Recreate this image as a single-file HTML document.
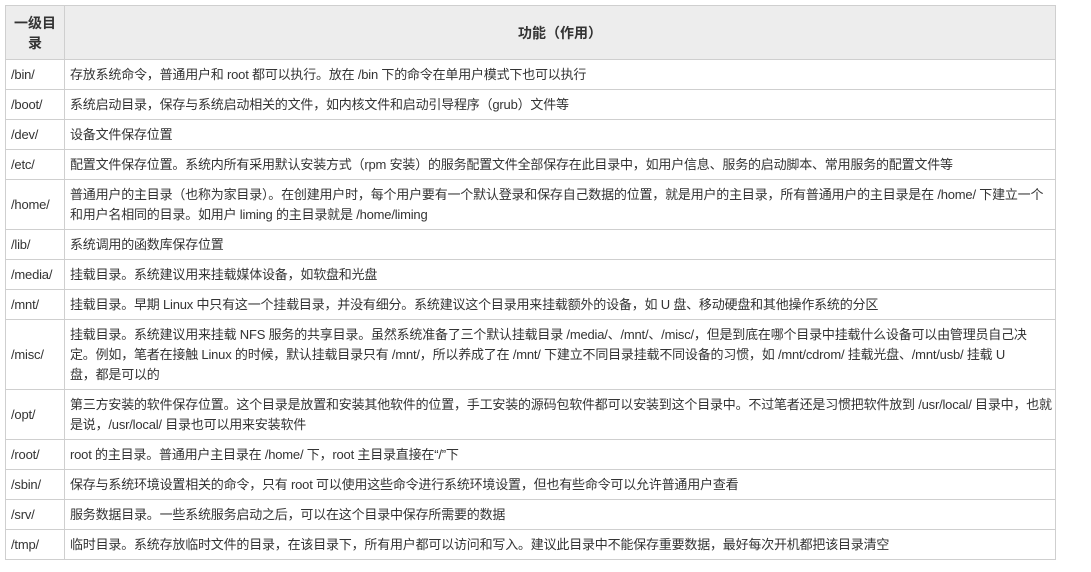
<!DOCTYPE html>
<html><head><meta charset="utf-8"><style>
html,body{margin:0;padding:0;background:#fff;width:1091px;height:572px;overflow:hidden}
body{font-family:"Liberation Sans","Noto Sans CJK SC",sans-serif;font-size:13px;color:#333}
table{position:absolute;left:5px;top:5px;width:1051px;border-collapse:collapse;table-layout:fixed}
td,th{border:1px solid #cfcfcf;padding:0 5px;line-height:20px;vertical-align:middle;text-align:left}
td{letter-spacing:-0.2px}
td.nw{white-space:nowrap;overflow:hidden}
th{background:#ededed;font-weight:bold;text-align:center;height:53px;color:#333;font-size:14px}
td{height:29px}
td.t{height:49px}
td.th3{height:69px}
</style></head><body>
<table>
<colgroup><col style="width:59px"><col></colgroup>
<tr><th>一级目<br>录</th><th>功能（作用）</th></tr>
<tr><td>/bin/</td><td>存放系统命令，普通用户和 root 都可以执行。放在 /bin 下的命令在单用户模式下也可以执行</td></tr>
<tr><td>/boot/</td><td>系统启动目录，保存与系统启动相关的文件，如内核文件和启动引导程序（grub）文件等</td></tr>
<tr><td>/dev/</td><td>设备文件保存位置</td></tr>
<tr><td>/etc/</td><td>配置文件保存位置。系统内所有采用默认安装方式（rpm 安装）的服务配置文件全部保存在此目录中，如用户信息、服务的启动脚本、常用服务的配置文件等</td></tr>
<tr><td class="t">/home/</td><td>普通用户的主目录（也称为家目录）。在创建用户时，每个用户要有一个默认登录和保存自己数据的位置，就是用户的主目录，所有普通用户的主目录是在 /home/ 下建立一个和用户名相同的目录。如用户 liming 的主目录就是 /home/liming</td></tr>
<tr><td>/lib/</td><td>系统调用的函数库保存位置</td></tr>
<tr><td>/media/</td><td>挂载目录。系统建议用来挂载媒体设备，如软盘和光盘</td></tr>
<tr><td>/mnt/</td><td>挂载目录。早期 Linux 中只有这一个挂载目录，并没有细分。系统建议这个目录用来挂载额外的设备，如 U 盘、移动硬盘和其他操作系统的分区</td></tr>
<tr><td class="th3">/misc/</td><td class="nw">挂载目录。系统建议用来挂载 NFS 服务的共享目录。虽然系统准备了三个默认挂载目录 /media/、/mnt/、/misc/，但是到底在哪个目录中挂载什么设备可以由管理员自己决<br>定。例如，笔者在接触 Linux 的时候，默认挂载目录只有 /mnt/，所以养成了在 /mnt/ 下建立不同目录挂载不同设备的习惯，如 /mnt/cdrom/ 挂载光盘、/mnt/usb/ 挂载 U<br>盘，都是可以的</td></tr>
<tr><td class="t">/opt/</td><td class="nw">第三方安装的软件保存位置。这个目录是放置和安装其他软件的位置，手工安装的源码包软件都可以安装到这个目录中。不过笔者还是习惯把软件放到 /usr/local/ 目录中，也就<br>是说，/usr/local/ 目录也可以用来安装软件</td></tr>
<tr><td>/root/</td><td>root 的主目录。普通用户主目录在 /home/ 下，root 主目录直接在“/”下</td></tr>
<tr><td>/sbin/</td><td>保存与系统环境设置相关的命令，只有 root 可以使用这些命令进行系统环境设置，但也有些命令可以允许普通用户查看</td></tr>
<tr><td>/srv/</td><td>服务数据目录。一些系统服务启动之后，可以在这个目录中保存所需要的数据</td></tr>
<tr><td>/tmp/</td><td>临时目录。系统存放临时文件的目录，在该目录下，所有用户都可以访问和写入。建议此目录中不能保存重要数据，最好每次开机都把该目录清空</td></tr>
</table>
</body></html>
